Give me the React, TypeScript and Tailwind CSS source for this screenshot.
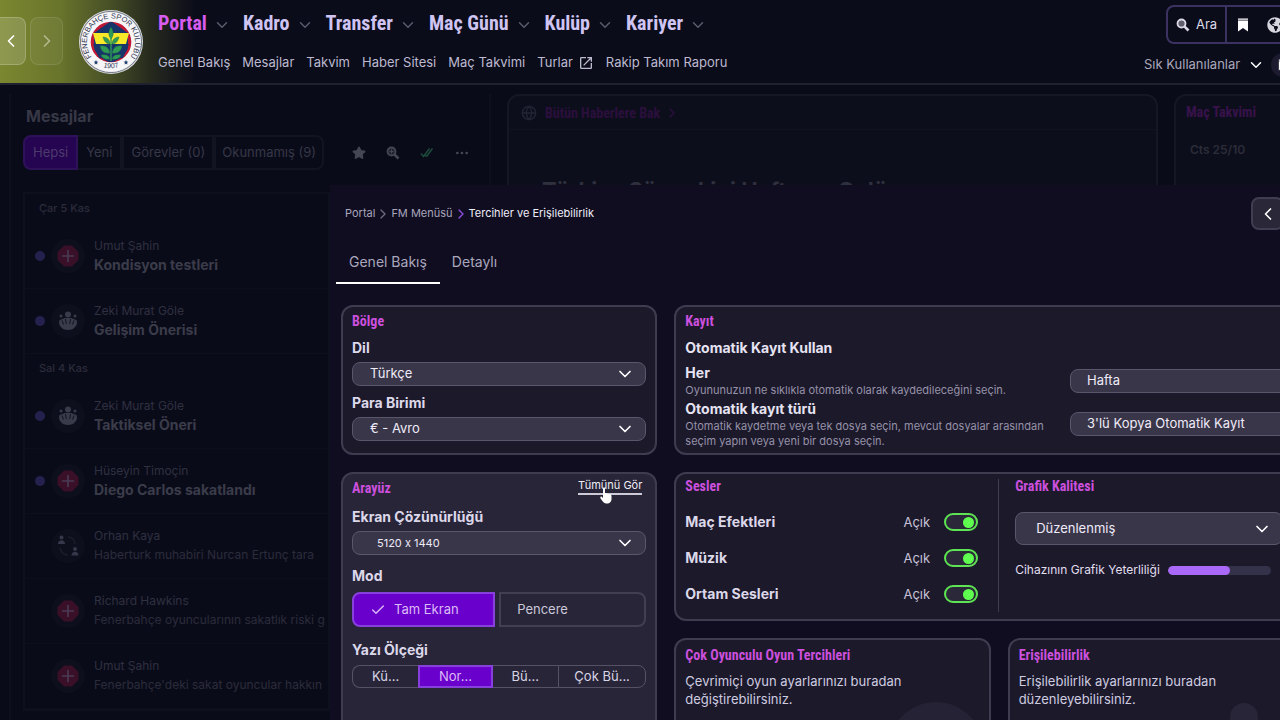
import type { ReactNode } from "react";
import { Check, ChevronDown, ChevronLeft, ChevronRight, Ellipsis, Globe, Star } from "lucide-react";
import { FaGlobeAmericas } from "react-icons/fa";
import { MdOpenInNew } from "react-icons/md";
import clsx from "clsx";

type MessageKind = "medical" | "team" | "transfer";

interface IMessage {
  sender: string;
  subject: string;
  kind: MessageKind;
  unread?: boolean;
}

const navItems = ["Portal", "Kadro", "Transfer", "Maç Günü", "Kulüp", "Kariyer"];

const subItems = [
  { label: "Genel Bakış" },
  { label: "Mesajlar" },
  { label: "Takvim" },
  { label: "Haber Sitesi" },
  { label: "Maç Takvimi" },
  { label: "Turlar", external: true },
  { label: "Rakip Takım Raporu" },
];

const messageDays: { date: string; messages: IMessage[] }[] = [
  {
    date: "Çar 5 Kas",
    messages: [
      { sender: "Umut Şahin", subject: "Kondisyon testleri", kind: "medical", unread: true },
      { sender: "Zeki Murat Göle", subject: "Gelişim Önerisi", kind: "team", unread: true },
    ],
  },
  {
    date: "Sal 4 Kas",
    messages: [
      { sender: "Zeki Murat Göle", subject: "Taktiksel Öneri", kind: "team", unread: true },
      { sender: "Hüseyin Timoçin", subject: "Diego Carlos sakatlandı", kind: "medical", unread: true },
      { sender: "Orhan Kaya", subject: "Haberturk muhabiri Nurcan Ertunç tara", kind: "transfer" },
      { sender: "Richard Hawkins", subject: "Fenerbahçe oyuncularının sakatlık riski g", kind: "medical" },
      { sender: "Umut Şahin", subject: "Fenerbahçe'deki sakat oyuncular hakkın", kind: "medical" },
    ],
  },
];

const sounds = ["Maç Efektleri", "Müzik", "Ortam Sesleri"];

const Crest = () => (
  <svg viewBox="0 0 64 64" className="size-16 shrink-0" role="img" aria-label="Fenerbahçe Spor Kulübü">
    <defs>
      <path id="crest-top" d="M 13.7 48 A 24 24 0 1 1 50.300 48" />
      <path id="crest-bottom" d="M 17 54 A 28.4 28.4 0 0 0 47 54" />
      <clipPath id="crest-inner">
        <circle cx="32" cy="32" r="20" />
      </clipPath>
    </defs>
    <circle cx="32" cy="32" r="32" fill="#d9dbdf" />
    <circle cx="32" cy="32" r="30.6" fill="none" stroke="#4b5162" strokeWidth="0.7" />
    <circle cx="32" cy="32" r="29.8" fill="#f6f6f8" />
    <circle cx="32" cy="32" r="20.3" fill="#c01734" />
    <g clipPath="url(#crest-inner)">
      <path d="M15 23 32 11l17 12v15c-3 8-9 12-17 15-8-3-14-7-17-15z" fill="#17356b" />
      <path d="M14 23h36l-3 11H17z" fill="#f7e92a" />
      <path d="M14 34 20 48h24l6-14-18 8z" fill="#17356b" />
    </g>
    <g fill="#2f9a56" stroke="#17603a" strokeWidth="0.4">
      <path d="M32 17c3 5 3 8 0 12-3-4-3-7 0-12z" />
      <path d="M31 34c-4 0-6-3-7-7 4 0 7 3 7 7z" />
      <path d="M33 34c4 0 6-3 7-7-4 0-7 3-7 7z" />
      <path d="M31 43c-6 1-9-2-10-7 6-1 9 2 10 7z" />
      <path d="M33 43c6 1 9-2 10-7-6-1-9 2-10 7z" />
      <path d="M31 49c-5 1-8-1-9-4 5-1 8 0 9 4z" />
      <path d="M33 49c5 1 8-1 9-4-5-1-8 0-9 4z" />
    </g>
    <path d="M32 27v24" stroke="#2f9a56" strokeWidth="1.4" />
    <g fill="#24406f">
      <path d="m17 50 .7 1.5 1.6.2-1.2 1.1.3 1.7-1.4-.8-1.4.8.3-1.7-1.2-1.1 1.6-.2z" />
      <path d="m47 50 .7 1.5 1.6.2-1.2 1.1.3 1.7-1.4-.8-1.4.8.3-1.7-1.2-1.1 1.6-.2z" />
    </g>
    <text className="font-['Liberation_Sans',sans-serif]" fontSize="7.4" fill="#2d3550">
      <textPath href="#crest-top" startOffset="50%" textAnchor="middle">
        FENERBAHÇE SPOR KULÜBÜ
      </textPath>
    </text>
    <text className="font-['Liberation_Sans',sans-serif]" fontSize="7" fill="#2d3550">
      <textPath href="#crest-bottom" startOffset="50%" textAnchor="middle">
        1907
      </textPath>
    </text>
  </svg>
);

const SearchIcon = ({ className, plus }: { className?: string; plus?: boolean }) => (
  <svg viewBox="0 0 14 14" className={className} fill="none" stroke="currentColor">
    <circle cx="5.500" cy="5.500" r="4" strokeWidth="1.800" fill="currentColor" fillOpacity="0.400" />
    <path d="M8.600 8.600 12.500 12.500" strokeWidth="2.600" />
    {plus && <path d="M5.500 3.500v4M3.500 5.500h4" strokeWidth="1" />}
  </svg>
);

const BookmarkIcon = ({ className }: { className?: string }) => (
  <svg viewBox="0 0 12 14" className={className} fill="currentColor">
    <path d="M1 .5h10v1.300H1zM1 2.500h10V13.500L6 10l-5 3.500z" />
  </svg>
);

const MessageIcon = ({ kind }: { kind: MessageKind }) => (
  <svg viewBox="0 0 34 34" className="size-[34px] shrink-0">
    <circle cx="17" cy="17" r="17" fill="#0d0f1c" />
    {kind === "medical" && (
      <>
        <path
          d="M13.500 7.500h7l6 6v7l-6 6h-7l-6-6v-7z"
          fill="#3a1029"
          stroke="#3a1029"
          strokeWidth="2"
          strokeLinejoin="round"
        />
        <path d="M17 11v12M11 17h12" stroke="#4a3b54" strokeWidth="1.6" />
      </>
    )}
    {kind === "team" && (
      <g fill="#3a3b4a">
        <circle cx="17" cy="10.500" r="3" />
        <circle cx="10" cy="12" r="1.500" />
        <circle cx="24" cy="12" r="1.500" />
        <path d="M8.500 16c2-1 4-1 5-2h7c1 1 3 1 5 2 1 3 .5 5-1.500 7-2 4-12 4-14 0-2-2-2.500-4-1.500-7z" />
        <path d="M11 16.500l1.500 4M14.500 15l.8 5M19.500 15l-.8 5M23 16.500l-1.500 4" stroke="#0d0f1c" strokeWidth="0.900" />
      </g>
    )}
    {kind === "transfer" && (
      <g fill="#35374a">
        <circle cx="10.500" cy="8.500" r="2" />
        <path d="M7 15c0-5 7-5 7 0z" />
        <circle cx="24" cy="20" r="2" />
        <path d="M20.500 26.500c0-5 7-5 7 0z" />
        <path d="M17 8c4 0 7 3 7 7M17 26c-4 0-7-3-8-7" stroke="#1b1d2c" strokeWidth="1.500" fill="none" />
      </g>
    )}
  </svg>
);

const Title = ({ children }: { children: ReactNode }) => (
  <h2 className="font-['Liberation_Sans_Narrow','Roboto_Condensed',Roboto,sans-serif] text-sm leading-5 font-bold text-[#cb50dd]">
    {children}
  </h2>
);

const Card = ({ className, children }: { className?: string; children: ReactNode }) => (
  <section className={clsx("relative rounded-xl border-2 border-[#3f3c50]", className)}>{children}</section>
);

interface SelectProps {
  id: string;
  label?: string;
  value: string;
  className?: string;
}

const Select = ({ id, label, value, className }: SelectProps) => (
  <div className="relative">
    <select
      id={id}
      aria-label={label}
      className={clsx(
        "block w-full appearance-none rounded-lg border border-[#5a566b] bg-[#3a364a] text-[#eeebf8]",
        className
      )}
    >
      <option>{value}</option>
    </select>
    <ChevronDown className="pointer-events-none absolute top-1/2 right-[11px] size-5 -translate-y-1/2 text-white" />
  </div>
);

const Header = () => (
  <header className="flex h-[85px] shrink-0 overflow-hidden border-b-2 border-[#20212e] bg-[linear-gradient(to_right,#7c8730_0px,#69742c_60px,#474f26_110px,#262a1e_150px,#0b0c1a_195px)]">
    <div className="flex items-center gap-1 pb-px">
      <button aria-label="Geri" className="flex h-12 w-[26px] items-center justify-center rounded-r-lg border border-l-0 border-white/20 bg-white/15 pr-1 text-white">
        <ChevronLeft className="size-5" />
      </button>
      <button aria-label="İleri" className="flex h-12 w-[33px] items-center justify-center rounded-lg border border-white/10 bg-white/5 text-[#b4b98c]">
        <ChevronRight className="size-5" />
      </button>
    </div>
    <div className="ml-4 flex items-center">
      <Crest />
    </div>
    <div className="ml-[15px] flex-1">
      <nav className="flex h-[46px] items-center gap-3">
        {navItems.map((item) => (
          <button
            key={item}
            className={clsx(
              "flex items-center gap-[6px] font-['Liberation_Sans_Narrow','Roboto_Condensed',Roboto,sans-serif] text-xl leading-7 font-bold",
              item === "Portal" ? "text-[#d75cf0]" : "text-[#cfc4f2]"
            )}
          >
            {item}
            <ChevronDown className="mt-1 size-[18px] text-[#5b5a6e]" />
          </button>
        ))}
      </nav>
      <nav className="flex h-[34px] items-center gap-3 text-[13px] whitespace-nowrap text-[#bdbad0]">
        {subItems.map((item) => (
          <a key={item.label} href="#" className="flex items-center gap-[5px]">
            {item.label}
            {item.external && <MdOpenInNew className="size-4" />}
          </a>
        ))}
      </nav>
    </div>
    <div className="-mr-10 flex w-[176px] shrink-0 flex-col">
      <div className="mt-[5px] ml-[22px] flex h-[39px] shrink-0 rounded-lg border-2 border-[#3b3261] text-[#dcdae8]">
        <button className="flex w-[59px] items-center justify-center gap-[6px] border-r-2 border-[#3b3261] text-[13px]">
          <SearchIcon className="size-[14px]" />
          Ara
        </button>
        <button aria-label="Yer imleri" className="flex w-8 items-center justify-center">
          <BookmarkIcon className="h-[14px] w-3 text-white" />
        </button>
        <button aria-label="Dünya" className="flex w-8 items-center justify-center">
          <FaGlobeAmericas className="size-4 text-[#d5d5de]" />
        </button>
      </div>
      <div className="mt-[11px] flex h-5 items-center text-[13px] whitespace-nowrap text-[#a9a7ba]">
        <button className="flex items-center gap-[7px]">
          Sık Kullanılanlar
          <ChevronDown className="size-[18px] text-white" />
        </button>
        <button aria-label="Kaydet" className="ml-[6px] flex size-6 shrink-0 items-center justify-center rounded-full bg-[#1c1a2e]">
          <BookmarkIcon className="h-3 w-[10px] text-white" />
        </button>
      </div>
    </div>
  </header>
);

const Messages = () => (
  <section className="ml-[9px] w-[482px] shrink-0 border-x-2 border-[#0e101d] pl-3">
    <h2 className="mt-[10px] ml-[3px] h-6 text-base leading-6 font-bold text-[#373846]">Mesajlar</h2>
    <div className="mt-[7px] flex items-center text-[13px] text-[#363747]">
      <div className="flex h-[35px]">
        <button className="rounded-l-lg border-2 border-[#2e1259] bg-[#250451] px-2 text-[#4d3a6c]">Hepsi</button>
        <button className="border-2 border-l-0 border-[#121422] px-2">Yeni</button>
        <button className="border-2 border-[#121422] px-[7px]">Görevler (0)</button>
        <button className="rounded-r-lg border-2 border-[#121422] px-[6px]">Okunmamış (9)</button>
      </div>
      <div className="flex items-center gap-5 pl-7">
        <Star className="size-[14px] fill-current text-[#464754]" />
        <SearchIcon className="size-[14px] text-[#464754]" plus />
        <svg viewBox="0 0 14 14" className="size-[14px] text-[#1d4a3b]" fill="none" stroke="currentColor" strokeWidth="1.500">
          <path d="m1 7.500 2.500 3 6-8M6.500 10.500l6-8M5 9l1.500 1.500" />
        </svg>
        <Ellipsis className="size-4 text-[#464754]" />
      </div>
    </div>
    <div className="mt-[22px] w-[307px] border-2 border-[#0e101d]">
      {messageDays.map((day) => (
        <div key={day.date}>
          <h3 className="h-[30px] pl-[14px] text-[11px] leading-7 font-medium text-[#2b2c3b]">{day.date}</h3>
          <ul>
            {day.messages.map((message) => (
              <li key={message.subject} className="flex h-[65px] items-center border-b border-[#0d0f1c] pl-[10px] whitespace-nowrap">
                <span className={clsx("size-[10px] shrink-0 rounded-full", message.unread && "bg-[#25204d]")} />
                <span className="ml-[6px] flex">
                  <MessageIcon kind={message.kind} />
                </span>
                <div className="ml-[9px]">
                  <p className="text-xs leading-[18px] text-[#2f3040]">{message.sender}</p>
                  <p
                    className={clsx(
                      "leading-5",
                      message.unread ? "text-sm font-bold text-[#3b3c4a]" : "text-xs text-[#2b2c3b]"
                    )}
                  >
                    {message.subject}
                  </p>
                </div>
              </li>
            ))}
          </ul>
        </div>
      ))}
    </div>
  </section>
);

const News = () => (
  <section className="ml-4 flex-1 rounded-t-xl border-2 border-[#151724] bg-[#0d0e1c]">
    <div className="flex h-[34px] items-center gap-2 border-b border-[#11131f] pl-3 text-[#2b0f3c]">
      <Globe className="size-4 text-[#242534]" />
      <h2 className="font-['Liberation_Sans_Narrow','Roboto_Condensed',Roboto,sans-serif] text-sm font-bold">
        Bütün Haberlere Bak
      </h2>
      <ChevronRight className="-ml-1 size-4" />
    </div>
    <p className="mt-11 pl-[33px] text-[22px] leading-8 font-bold text-[#2f303d]">Türkiye Süper Ligi Haftanın Golü</p>
  </section>
);

const Preferences = () => (
  <div role="dialog" aria-label="Tercihler" className="absolute top-[100px] -right-14 bottom-0 left-[330px] overflow-hidden bg-[#100d21]">
    <div className="mt-3 mr-[52px] flex h-[33px] items-center pl-[15px] text-[11px] text-[#a9a5bc]">
      <a href="#">Portal</a>
      <ChevronRight className="size-4 text-[#6e6a80]" />
      <a href="#">FM Menüsü</a>
      <ChevronRight className="size-4 text-[#8e4fe0]" />
      <span className="text-[#efedf8]">Tercihler ve Erişilebilirlik</span>
      <button aria-label="Daralt" className="ml-auto flex size-[33px] items-center justify-center rounded-lg border-2 border-[#403d50] bg-[#2a2739] text-white">
        <ChevronLeft className="size-5" />
      </button>
    </div>
    <div className="mt-[10px] flex h-11 pl-[6px] text-sm text-[#aaa7bd]">
      <button className="border-b-2 border-white px-[13px] pt-px">Genel Bakış</button>
      <button className="border-b-2 border-transparent px-3 pt-px">Detaylı</button>
    </div>

    <div className="mt-[21px] mr-3 ml-[11px] grid grid-cols-3 gap-[17px]">
      <div className="flex flex-col gap-[17px]">
        <Card className="bg-[#1c192b] px-[9px] pt-1 pb-3">
          <Title>Bölge</Title>
          <label htmlFor="language" className="mt-[7px] mb-1 block text-sm leading-5 font-bold text-[#dcd8ea]">
            Dil
          </label>
          <Select id="language" value="Türkçe" className="h-6 pl-[17px] text-[13px]" />
          <label htmlFor="currency" className="mt-[7px] mb-1 block text-sm leading-5 font-bold text-[#dcd8ea]">
            Para Birimi
          </label>
          <Select id="currency" value="€ - Avro" className="h-6 pl-[17px] text-[13px]" />
        </Card>

        <Card className="flex-1 bg-[#282538] px-[9px] pt-1 pb-12">
          <div className="flex items-start justify-between pr-1">
            <Title>Arayüz</Title>
            <a href="#" className="relative -mt-px h-[18px] border-b-2 border-[#cdcad8] text-[11px] leading-4 text-[#efedf6]">
              Tümünü Gör
              <svg viewBox="0 0 12 17" className="absolute top-[10px] left-[22px] h-[17px] w-3">
                <path
                  d="M3 1.500c0-1.500 2-1.500 2 0v4.500l5 1.300c1 .3 1.500 1 1.500 2v3c0 2-1.500 4.200-3.500 4.200H6C4 16.500 2 13.500.600 11.500-.300 10 1 9 2 10l1 1z"
                  fill="#fff"
                />
              </svg>
            </a>
          </div>
          <label htmlFor="resolution" className="mt-[9px] mb-1 block text-sm leading-5 font-bold text-[#dcd8ea]">
            Ekran Çözünürlüğü
          </label>
          <Select id="resolution" value="5120 x 1440" className="h-6 pl-6 text-[11px] [font-feature-settings:'calt'_0]" />
          <h3 className="mt-[11px] text-sm leading-5 font-bold text-[#dcd8ea]">Mod</h3>
          <div className="mt-[6px] grid h-[35px] grid-cols-[143fr_147fr] gap-1 text-[13px]">
            <button className="flex items-center gap-2 rounded-l-lg border-2 border-[#8840dd] bg-[#6a00cb] pl-4 text-[#dcbcf7]">
              <Check className="size-4" />
              Tam Ekran
            </button>
            <button className="rounded-r-lg border-2 border-[#423f53] pl-4 text-left text-[#cbc8d9]">Pencere</button>
          </div>
          <h3 className="mt-[13px] text-sm leading-5 font-bold text-[#dcd8ea]">Yazı Ölçeği</h3>
          <div className="mt-[5px] grid h-[23px] grid-cols-[66fr_74fr_65fr_88fr] text-[13px] leading-none text-[#d8d5e6]">
            <button className="rounded-l-lg border border-r-0 border-[#555266]">Kü...</button>
            <button className="border-2 border-[#8840dd] bg-[#6a00cb] text-[#dcbcf7]">Nor...</button>
            <button className="border-y border-[#555266]">Bü...</button>
            <button className="rounded-r-lg border border-[#555266]">Çok Bü...</button>
          </div>
        </Card>
      </div>

      <div className="col-span-2 flex flex-col gap-[17px]">
        <Card className="bg-[#1c192b] px-[9px] pt-1 pb-1">
          <Title>Kayıt</Title>
          <h3 className="mt-[7px] mb-[5px] text-sm leading-5 font-bold text-[#e6e3f2]">Otomatik Kayıt Kullan</h3>
          <div className="grid grid-cols-[1fr_243px] items-center">
            <div className="pb-px">
              <label htmlFor="interval" className="block text-sm leading-5 font-bold text-[#e6e3f2]">
                Her
              </label>
              <p className="text-[11px] leading-[15px] text-[#9692a8]">
                Oyununuzun ne sıklıkla otomatik olarak kaydedileceğini seçin.
              </p>
            </div>
            <Select id="interval" value="Hafta" className="h-6 pl-4 text-[13px]" />
            <div>
              <label htmlFor="save-type" className="block text-sm leading-5 font-bold text-[#e6e3f2]">
                Otomatik kayıt türü
              </label>
              <p className="text-[11px] leading-[15px] text-[#9692a8]">
                Otomatik kaydetme veya tek dosya seçin, mevcut dosyalar arasından
                <br />
                seçim yapın veya yeni bir dosya seçin.
              </p>
            </div>
            <Select id="save-type" value="3'lü Kopya Otomatik Kayıt" className="h-6 pl-4 text-[13px]" />
          </div>
        </Card>

        <Card className="grid grid-cols-2 bg-[#1c192b] pb-[7px]">
          <div className="relative px-[9px] pt-[2px]">
            <Title>Sesler</Title>
            <div className="mt-2 pr-3">
              {sounds.map((sound) => (
                <label key={sound} className="flex h-9 items-center text-sm">
                  <span className="font-bold text-[#dcd8ea]">{sound}</span>
                  <span className="mr-[14px] ml-auto text-[13px] text-[#c5c1d6]">Açık</span>
                  <input
                    type="checkbox"
                    defaultChecked
                    className="flex h-[18px] w-[34px] appearance-none items-center rounded-full border-2 border-[#5ee352] bg-[#2b2839] px-[2px] before:size-[11px] before:rounded-full before:bg-[#5fff50] checked:justify-end"
                  />
                </label>
              ))}
            </div>
            <div className="absolute top-[5px] right-0 bottom-0 w-px bg-[#403d52]" />
          </div>
          <div className="pt-[2px] pr-[39px] pl-4">
            <Title>Grafik Kalitesi</Title>
            <div className="mt-4">
              <Select id="graphics" label="Grafik Kalitesi" value="Düzenlenmiş" className="h-[33px] pl-5 text-[13px]" />
            </div>
            <div className="mt-[15px] flex h-5 items-center gap-2 text-xs whitespace-nowrap text-[#e2dfee]">
              Cihazının Grafik Yeterliliği
              <div
                role="progressbar"
                aria-label="Cihazının Grafik Yeterliliği"
                aria-valuenow={60}
                className="mr-3 h-[9px] flex-1 overflow-hidden rounded-full bg-[#34314a]"
              >
                <div className="h-full w-3/5 rounded-full bg-[#a968f8]" />
              </div>
            </div>
          </div>
        </Card>

        <div className="grid grid-cols-2 gap-[17px]">
          <Card className="h-36 overflow-hidden bg-[#1c192b] px-[9px] pt-[5px]">
            <Title>Çok Oyunculu Oyun Tercihleri</Title>
            <p className="mt-[7px] text-[13px] leading-[18px] text-[#cfcce0]">
              Çevrimiçi oyun ayarlarınızı buradan
              <br />
              değiştirebilirsiniz.
            </p>
            <div className="absolute top-[62px] right-[5px] size-24 rounded-full bg-[#252235]" />
          </Card>
          <Card className="h-36 overflow-hidden bg-[#1c192b] px-[9px] pt-[5px]">
            <Title>Erişilebilirlik</Title>
            <p className="mt-[7px] text-[13px] leading-[18px] text-[#cfcce0]">
              Erişilebilirlik ayarlarınızı buradan
              <br />
              düzenleyebilirsiniz.
            </p>
            <div className="absolute top-[63px] right-16 size-7 rounded-full bg-[#282538]" />
          </Card>
        </div>
      </div>
    </div>
  </div>
);

const App = () => (
  <div className="flex h-screen flex-col overflow-hidden bg-[#0a0b19] font-[Inter,sans-serif]">
    <Header />
    <main className="relative flex flex-1 overflow-hidden pt-[9px]">
      <Messages />
      <News />
      <section className="-mr-16 ml-4 w-[170px] shrink-0 rounded-t-xl border-2 border-[#151724] bg-[#0d0e1c] px-[10px] pt-1">
        <h2 className="font-['Liberation_Sans_Narrow','Roboto_Condensed',Roboto,sans-serif] text-sm leading-6 font-bold text-[#38124b]">
          Maç Takvimi
        </h2>
        <p className="mt-4 pl-1 text-xs leading-5 font-semibold text-[#2b2c38]">Cts 25/10</p>
      </section>
      <Preferences />
    </main>
  </div>
);

export default App;
